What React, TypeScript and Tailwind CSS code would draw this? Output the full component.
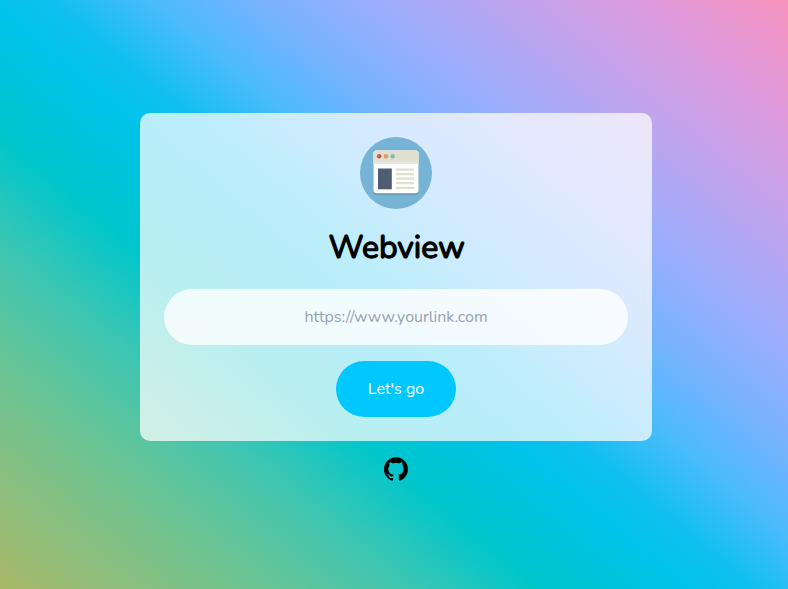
import { SiGithub } from "react-icons/si";

function BrowserLogo() {
  return (
    <svg className="size-[72px]" viewBox="0 0 72 72" aria-hidden="true">
      <circle cx="36" cy="36" r="36" fill="#77b3d4" />
      <rect x="13.5" y="15" width="45" height="42.8" rx="3" fill="#231f20" opacity=".2" />
      <rect x="13.5" y="13.5" width="45" height="42.8" rx="3" fill="#fff" />
      <path d="M13.5 27v-9.5a4 4 0 0 1 4-4h37a4 4 0 0 1 4 4V27z" fill="#e6e6e6" />
      <path d="M13.5 25v-7.5a4 4 0 0 1 4-4h37a4 4 0 0 1 4 4V25z" fill="#e0e0d1" />
      <circle cx="19.2" cy="19.2" r="2.25" fill="#c75c5c" />
      <circle cx="25.9" cy="19.2" r="2.25" fill="#e0995e" />
      <circle cx="32.7" cy="19.2" r="2.25" fill="#76c2af" />
      <rect x="18" y="31.5" width="13.8" height="20.8" fill="#4f5d73" />
      <path d="M36 32.6h18M36 37.1h18M36 41.6h18M36 46.1h18M36 50.9h18" stroke="#e0e0d1" strokeWidth="2.2" />
    </svg>
  );
}

export default function App() {
  return (
    <div className="flex h-screen w-full flex-col items-center justify-center overflow-hidden bg-[linear-gradient(40deg,#a8b868_0%,#8abf7f_9.09%,#69c495_18.18%,#3fc6b2_27.27%,#00c6cc_36.36%,#00c3ea_46%,#10c0f0_50.5%,#49bbfb_57%,#76b3fe_64%,#9eadfc_72.72%,#c1a3ed_81.81%,#df99da_90.9%,#f692be_100%)] pt-[5px] pl-1 font-[Nunito,Lato,sans-serif]">
      <main className="flex w-[512px] flex-col items-center rounded-[10px] bg-white/72 p-6">
        <BrowserLogo />
        <h1 className="mt-[19px] mb-[21px] pl-[1.5px] text-[32px] leading-10 font-normal text-black [-webkit-text-stroke:1.3px_black] [stroke-linejoin:round]">Webview</h1>
        <input
          className="h-14 w-full rounded-full bg-white/80 text-center text-base outline-none placeholder:text-gray-400"
          placeholder="https://www.yourlink.com"
          type="url"
        />
        <button className="mt-4 h-14 w-[120px] rounded-full bg-[#00c8ff] text-base text-white">Let's go</button>
      </main>
      <a className="mt-4 text-black" aria-label="GitHub">
        <SiGithub className="size-6" />
      </a>
    </div>
  );
}
